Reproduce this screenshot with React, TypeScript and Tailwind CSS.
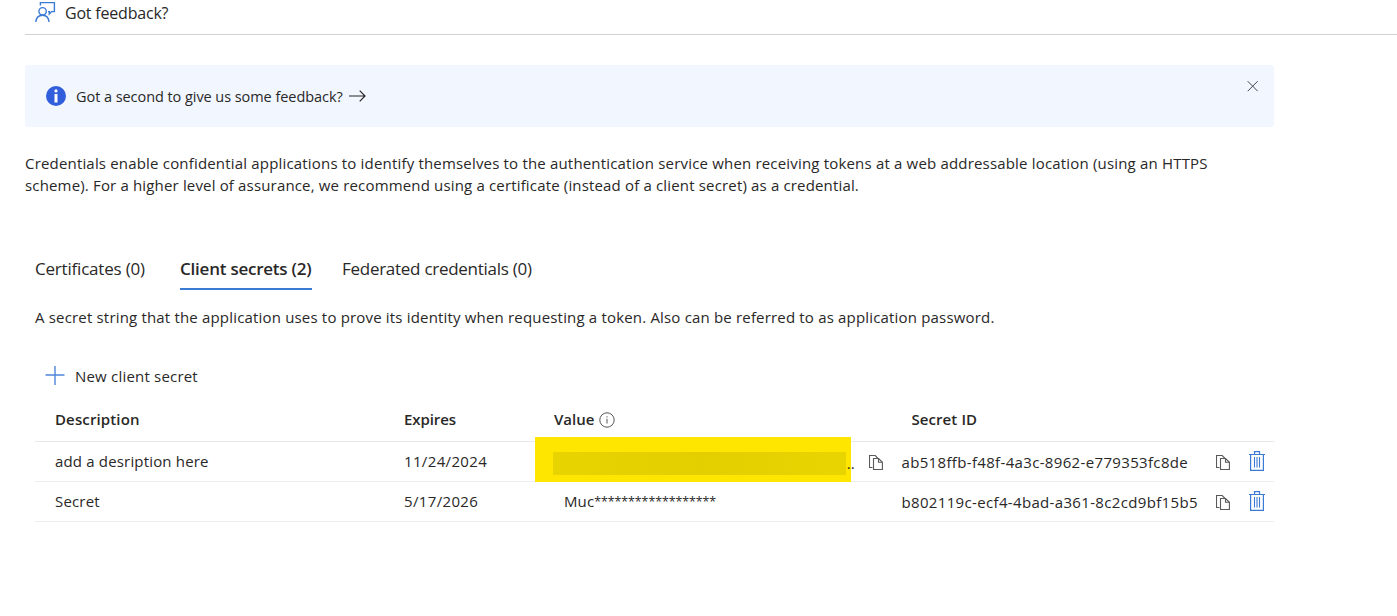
function FeedbackIcon() {
  return (
    <svg className="block h-[22px] w-[22px]" viewBox="0 0 22 22" fill="none" stroke="#3b7bd4" strokeWidth="1.4">
      <path d="M5.4 4.6V1.6H19.4V10.6H16.6L14.3 13V10.6H13" />
      <circle cx="7.6" cy="10.3" r="3.7" />
      <path d="M0.8 21C1.2 16.8 4 14.3 7.6 14.3S13.6 16.8 14 21" />
    </svg>
  );
}

function CopyIcon() {
  return (
    <svg className="block h-4 w-[14px]" viewBox="0 0 14 16" fill="none" stroke="#5a5a5a" strokeWidth="1.1">
      <path d="M3.5 12.5H0.5V0.5H6.2L9 3.3" />
      <path d="M4.5 3.5H9.6L13.4 7.3V14.5H4.5Z" fill="#fff" />
      <path d="M9.5 3.7V7.3H13.2" />
    </svg>
  );
}

function TrashIcon() {
  return (
    <svg className="block h-5 w-4" viewBox="0 0 16 20" fill="none" stroke="#3b7bd4" strokeWidth="1.2">
      <path d="M0 3.5H16M5.5 3.3V0.7H10.5V3.3M1.6 3.5V19.3H14.4V3.5" />
      <path d="M5.5 6V16.5M8 6V16.5M10.5 6V16.5" strokeWidth="1.1" />
    </svg>
  );
}

const secrets = [
  { description: "add a desription here", expires: "11/24/2024", value: null, id: "ab518ffb-f48f-4a3c-8962-e779353fc8de" },
  { description: "Secret", expires: "5/17/2026", value: "Muc", id: "b802119c-ecf4-4bad-a361-8c2cd9bf15b5" },
];

export default function App() {
  return (
    <div className="h-[616px] w-[1397px] overflow-hidden bg-white pl-[25px] font-['Open_Sans','Noto_Sans',sans-serif] text-[15px] text-[#292827]">
      <header className="flex h-[35px] items-start border-b border-[#d2d2d2] pl-[10px]">
        <div className="pt-px"><FeedbackIcon /></div>
        <span className="ml-2 pt-px text-[16px] leading-6 tracking-[-0.2px]">Got feedback?</span>
      </header>

      <div className="mt-[30px] flex h-[62px] w-[1249px] items-center rounded-[3px] bg-[#f1f6ff] pl-[21px]">
        <svg className="block h-5 w-5" viewBox="0 0 20 20">
          <circle cx="10" cy="10" r="10" fill="#315fdb" />
          <circle cx="10" cy="4.9" r="1.6" fill="#fff" />
          <path d="M8.5 8H11.5V16.5H8.5Z" fill="#fff" />
        </svg>
        <span className="ml-[10px] pt-[2px] text-[14.5px] leading-5 tracking-[-0.06px] whitespace-nowrap">Got a second to give us some feedback?</span>
        <svg className="ml-[6px] block h-3 w-[17px]" viewBox="0 0 17 12" fill="none" stroke="#292827" strokeWidth="1.2">
          <path d="M0 6H16M10.7 0.7L16 6L10.7 11.3" />
        </svg>
        <svg className="mr-4 mb-5 ml-auto block h-[11px] w-[11px]" viewBox="0 0 11 11" stroke="#44474d" strokeWidth="1">
          <path d="M0.7 0.2L10.7 10.2M10.7 0.2L0.7 10.2" />
        </svg>
      </div>

      <p className="mt-[25px] leading-[22px] tracking-[0.18px] whitespace-nowrap">
        Credentials enable confidential applications to identify themselves to the authentication service when receiving tokens at a web addressable location (using an HTTPS
        <br />
        <span className="tracking-[0.162px]">scheme). For a higher level of assurance, we recommend using a certificate (instead of a client secret) as a credential.</span>
      </p>

      <main className="ml-[10px] w-[1239px]">
        <nav className="mt-[61px] flex h-[33px] text-[17px] leading-6 whitespace-nowrap">
          <span className="w-[145px] tracking-[-0.2px]">Certificates (0)</span>
          <span className="mr-[30px] w-[132px] border-b-2 border-[#3b7bd4] font-semibold tracking-[-0.23px]">Client secrets (2)</span>
          <span className="tracking-[-0.27px]">Federated credentials (0)</span>
        </nav>

        <p className="mt-[15px] leading-6 tracking-[0.177px] whitespace-nowrap">
          A secret string that the application uses to prove its identity when requesting a token. Also can be referred to as application password.
        </p>

        <div className="mt-[35px] flex h-6 items-center pl-[10px]">
          <svg className="block h-5 w-5" viewBox="0 0 20 20" stroke="#4f86d8" strokeWidth="1.4">
            <path d="M0.5 9H19.5M10 0V19" />
          </svg>
          <span className="ml-[10px] tracking-[0.2px]">New client secret</span>
        </div>

        <section className="mt-[9px] whitespace-nowrap">
          <div className="flex h-[45px] items-center border-b border-[#e8e8e8] pl-5 font-semibold">
            <span className="w-[349px] tracking-[0.13px]">Description</span>
            <span className="w-[150px] tracking-[-0.1px]">Expires</span>
            <span className="pt-px">Value</span>
            <svg className="mt-px ml-[5px] block h-4 w-4" viewBox="0 0 16 16" fill="none" stroke="#555" strokeWidth="1">
              <circle cx="8" cy="8" r="7.2" />
              <path d="M8 6.8V11.5M8 4.3V5.5" />
            </svg>
            <span className="ml-[296px] tracking-[0.1px]">Secret ID</span>
          </div>
          {secrets.map((secret) => (
            <div key={secret.id} className="relative flex h-10 items-center border-b border-[#eeeeee] pl-5">
              <span className="w-[349px] tracking-[0.17px]">{secret.description}</span>
              <span className="w-[160px] tracking-[0.35px]">{secret.expires}</span>
              {secret.value ? (
                <span className="flex w-[337px] items-center">
                  <span className="tracking-[0.1px]">{secret.value}</span>
                  <span className="text-[12.4px] leading-5 tracking-[-0.05px]">******************</span>
                </span>
              ) : (
                <>
                  <div className="absolute top-[-5px] left-[500px] h-[45px] w-[315.5px] bg-[#ffe600] pt-[15px] pl-[18px]">
                    <div className="h-[23px] w-[293px] bg-linear-to-r from-[#e8d400] via-[#e3ce00] to-[#e8d500]" />
                  </div>
                  <span className="relative flex w-[337px] items-center justify-end">
                    <span className="mr-[14px] pt-[3px] tracking-[0.2px]">..</span>
                    <span className="mr-[18px] pt-[3px]"><CopyIcon /></span>
                  </span>
                </>
              )}
              <span className="w-[315px] pl-[0.5px] pt-px tracking-[0.34px]">{secret.id}</span>
              <span className="w-[33px] pt-[3px]"><CopyIcon /></span>
              <span className="pb-[2px]"><TrashIcon /></span>
            </div>
          ))}
        </section>
      </main>
    </div>
  );
}
